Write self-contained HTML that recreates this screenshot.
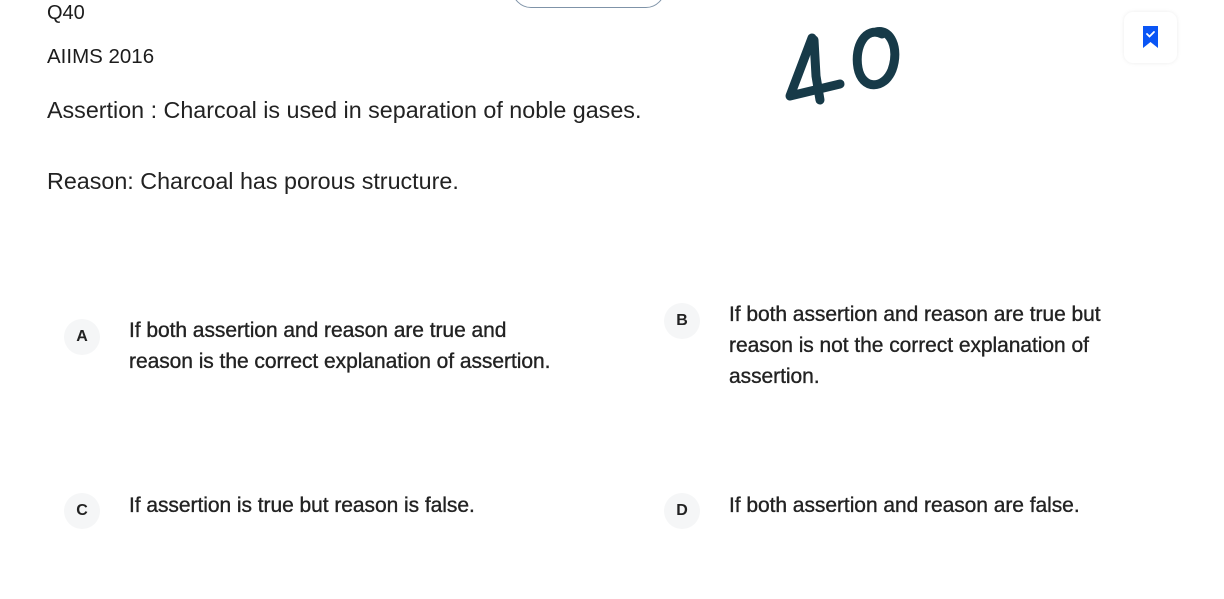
<!DOCTYPE html>
<html><head><meta charset="utf-8"><style>
*{margin:0;padding:0;box-sizing:border-box}
body{width:1224px;height:599px;background:#fff;position:relative;overflow:hidden;font-family:"Liberation Sans",sans-serif;color:#1c1c1c}
.t{position:absolute;white-space:nowrap}
.c{position:absolute;width:36px;height:36px;border-radius:50%;background:#f5f6f7;font-weight:bold;font-size:16px;text-align:center;line-height:36px;color:#222}
.o{position:absolute;font-size:21px;line-height:31px;color:#222;letter-spacing:-0.05px;-webkit-text-stroke:0.35px #222}
</style></head><body>
<div style="position:absolute;left:512px;top:-30px;width:153px;height:38px;border:1.5px solid #7f93a8;border-radius:20px"></div>
<div class="t" style="left:47px;top:2px;font-size:20px">Q40</div>
<div class="t" style="left:47px;top:45px;font-size:20.5px">AIIMS 2016</div>
<div class="t" style="left:47px;top:97px;font-size:23.3px;color:#222">Assertion : Charcoal is used in separation of noble gases.</div>
<div class="t" style="left:47px;top:168px;font-size:23.3px;color:#222">Reason: Charcoal has porous structure.</div>
<svg style="position:absolute;left:780px;top:18px" width="130" height="90" viewBox="0 0 130 90">
<g fill="none" stroke="#173a48" stroke-width="9" stroke-linecap="round" stroke-linejoin="round">
<path d="M32 20 L10 78 L60 66"/>
<path d="M34 22 L36 58 L40 82"/>
<path d="M102 16 C86 8 74 28 78 50 C82 72 104 72 112 52 C120 30 110 10 96 14"/>
</g></svg>
<div style="position:absolute;left:1124px;top:12px;width:53px;height:51px;border-radius:9px;background:#fff;box-shadow:0 0 4px rgba(0,0,0,0.08)"></div>
<svg style="position:absolute;left:1141px;top:25px" width="19" height="24" viewBox="0 0 19 24">
<path d="M2 1 H17 V23 L9.5 17 L2 23 Z" fill="#0a55f5"/>
<path d="M6 9 L8.5 11.5 L13 7" stroke="#fff" stroke-width="1.8" fill="none" stroke-linecap="round"/>
</svg>
<div class="c" style="left:64px;top:319px">A</div>
<div class="o" style="left:129px;top:315px">If both assertion and reason are true and<br>reason is the correct explanation of assertion.</div>
<div class="c" style="left:664px;top:303px">B</div>
<div class="o" style="left:729px;top:299px">If both assertion and reason are true but<br>reason is not the correct explanation of<br>assertion.</div>
<div class="c" style="left:64px;top:493px">C</div>
<div class="o" style="left:129px;top:490px">If assertion is true but reason is false.</div>
<div class="c" style="left:664px;top:493px">D</div>
<div class="o" style="left:729px;top:490px">If both assertion and reason are false.</div>
</body></html>
